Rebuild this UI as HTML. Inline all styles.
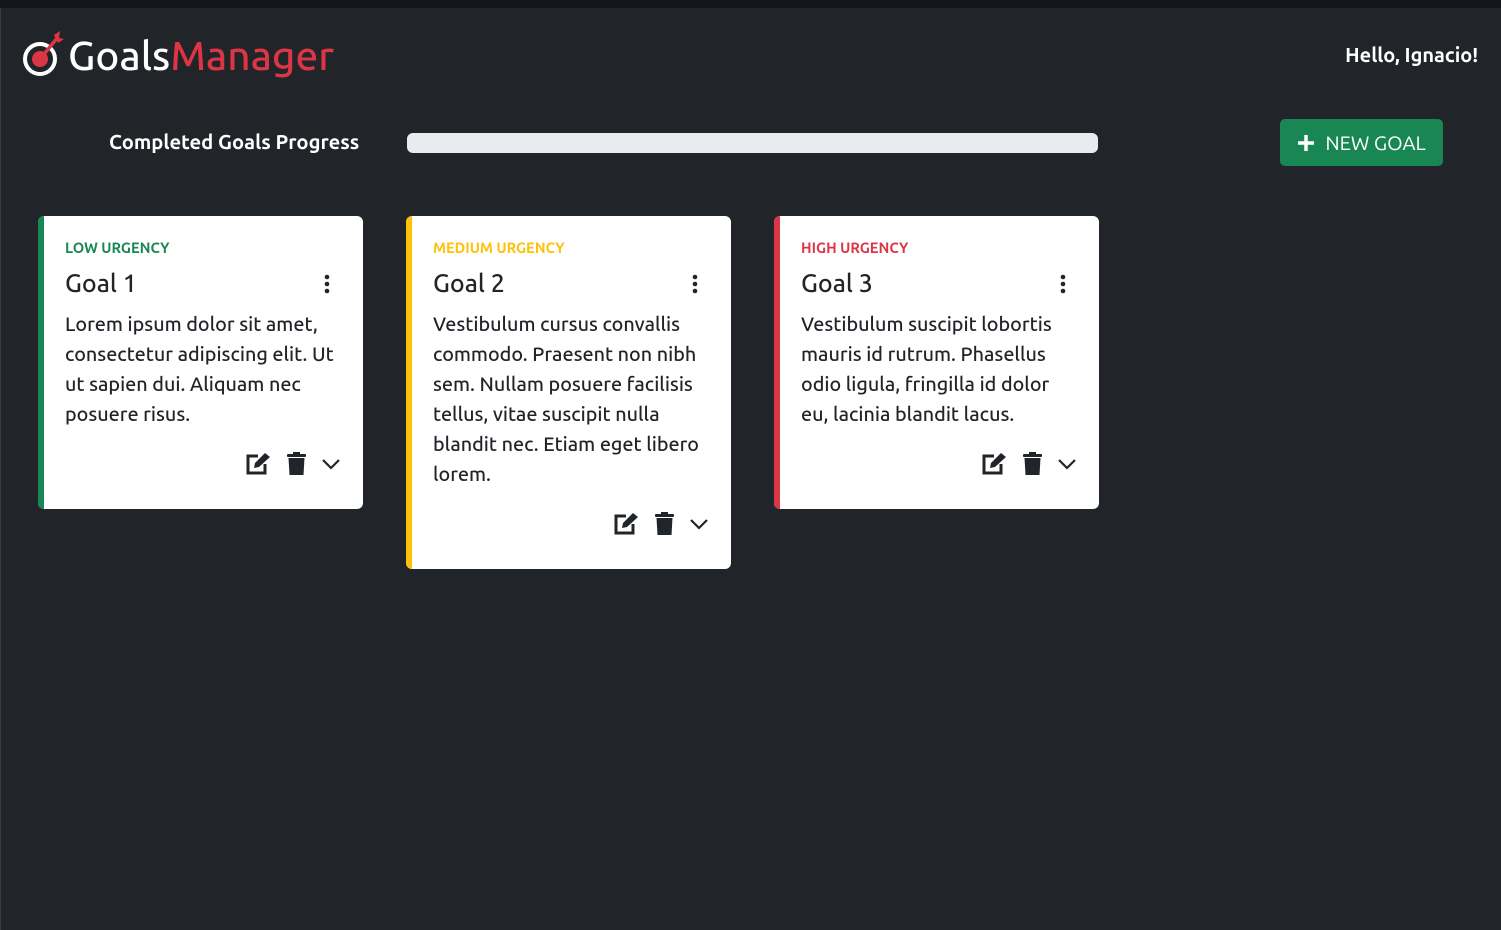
<!DOCTYPE html>
<html><head><meta charset="utf-8"><style>
*{box-sizing:border-box;margin:0;padding:0}
body{width:1501px;height:930px;background:#212529;font-family:"Ubuntu","DejaVu Sans","Liberation Sans",sans-serif;font-weight:500;color:#fff;position:relative;overflow:hidden}
.top{position:absolute;left:0;top:0;width:1501px;height:8px;background:#141619}
.lb{position:absolute;left:0;top:8px;width:1px;height:922px;background:#3a3e43}
.logo{position:absolute;left:22px;top:30px;height:50px;display:flex;align-items:center}
.logo span{font-size:40.5px;font-weight:500}
.hello{position:absolute;right:23px;top:43px;font-weight:bold;font-size:20px}
.prog-l{position:absolute;left:109px;top:130px;font-weight:bold;font-size:20.2px}
.bar{position:absolute;left:407px;top:133px;width:691px;height:20px;background:#e9ecef;border-radius:6px}
.btn{position:absolute;left:1280px;top:119px;width:163px;height:47px;background:#198754;border-radius:5px;display:flex;align-items:center;justify-content:center;font-size:20px;gap:10px;font-weight:400}
.card{position:absolute;top:216px;width:325px;background:#fff;border-radius:6px;color:#212529}
.card .b{position:absolute;left:0;top:0;bottom:0;width:6px;border-radius:6px 0 0 6px}
.u{position:absolute;left:27px;top:23px;font-size:14.6px;font-weight:bold}
.t{position:absolute;left:27px;top:53px;font-size:25px}
.d{position:absolute;left:27px;top:93px;font-size:19.75px;line-height:30px;white-space:nowrap}
.dots{position:absolute;right:33px;top:58px}
.ic{position:absolute;right:22px;display:flex;gap:15px;align-items:center}
</style></head><body>
<div class="top"></div><div class="lb"></div>
<div class="logo">
<svg width="42" height="48" viewBox="0 0 42 48"><circle cx="18" cy="28" r="15" fill="none" stroke="#fff" stroke-width="4"/><circle cx="18" cy="28" r="8" fill="#dc3545"/><line x1="18" y1="28" x2="36" y2="6" stroke="#dc3545" stroke-width="3.5"/><path d="M32 4 L38 0 L37 7 L42 8 L36 12 Z" fill="#dc3545"/></svg>
<span style="margin-left:4px">Goals</span><span style="color:#dc3545">Manager</span></div>
<div class="hello">Hello, Ignacio!</div>
<div class="prog-l">Completed Goals Progress</div>
<div class="bar"></div>
<div class="btn"><svg width="18" height="18"><path d="M9 1V17M1 9H17" stroke="#fff" stroke-width="3.5"/></svg>NEW GOAL</div>

<div class="card" style="left:38px;height:293px"><div class="b" style="background:#198754"></div>
<div class="u" style="color:#198754">LOW URGENCY</div><div class="t">Goal 1</div>
<svg class="dots" width="6" height="20"><circle cx="3" cy="3" r="2.3" fill="#212529"/><circle cx="3" cy="10" r="2.3" fill="#212529"/><circle cx="3" cy="17" r="2.3" fill="#212529"/></svg>
<div class="d">Lorem ipsum dolor sit amet,<br>consectetur adipiscing elit. Ut<br>ut sapien dui. Aliquam nec<br>posuere risus.</div>
<div class="ic" style="top:236px">ICONS</div></div>

<div class="card" style="left:406px;height:353px"><div class="b" style="background:#ffc107"></div>
<div class="u" style="color:#ffc107">MEDIUM URGENCY</div><div class="t">Goal 2</div>
<svg class="dots" width="6" height="20"><circle cx="3" cy="3" r="2.3" fill="#212529"/><circle cx="3" cy="10" r="2.3" fill="#212529"/><circle cx="3" cy="17" r="2.3" fill="#212529"/></svg>
<div class="d">Vestibulum cursus convallis<br>commodo. Praesent non nibh<br>sem. Nullam posuere facilisis<br>tellus, vitae suscipit nulla<br>blandit nec. Etiam eget libero<br>lorem.</div>
<div class="ic" style="top:296px">ICONS</div></div>

<div class="card" style="left:774px;height:293px"><div class="b" style="background:#dc3545"></div>
<div class="u" style="color:#dc3545">HIGH URGENCY</div><div class="t">Goal 3</div>
<svg class="dots" width="6" height="20"><circle cx="3" cy="3" r="2.3" fill="#212529"/><circle cx="3" cy="10" r="2.3" fill="#212529"/><circle cx="3" cy="17" r="2.3" fill="#212529"/></svg>
<div class="d">Vestibulum suscipit lobortis<br>mauris id rutrum. Phasellus<br>odio ligula, fringilla id dolor<br>eu, lacinia blandit lacus.</div>
<div class="ic" style="top:236px">ICONS</div></div>

<script>
var s='<svg width="27" height="24" viewBox="0 0 27 24"><path d="M13 4H3V21H20V12" fill="none" stroke="#212529" stroke-width="3"/><path d="M9 16L10 11L20 1L25 5L14 15Z" fill="#212529"/></svg><svg width="19" height="24" viewBox="0 0 19 24"><rect x="0" y="2" width="19" height="3" rx="1" fill="#212529"/><rect x="6" y="0" width="7" height="3" fill="#212529"/><path d="M1.5 6H17.5L16.5 23H2.5Z" fill="#212529"/></svg><svg width="20" height="24" viewBox="0 0 20 24"><path d="M2 8L10 16L18 8" fill="none" stroke="#212529" stroke-width="2.2"/></svg>';
document.querySelectorAll('.ic').forEach(function(e){e.innerHTML=s});
</script>
</body></html>
